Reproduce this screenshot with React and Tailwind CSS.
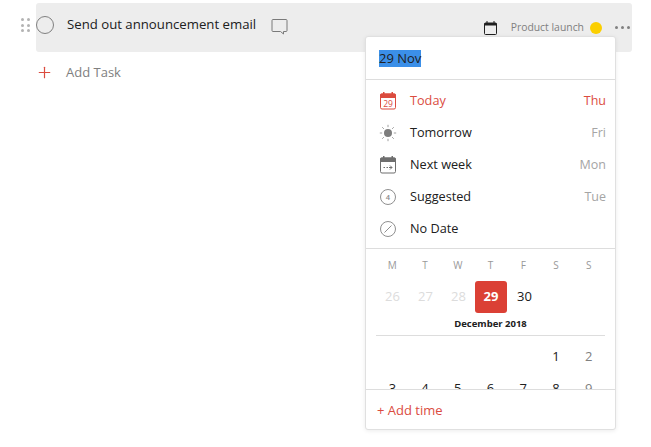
import { Plus } from 'lucide-react';

const font = { fontFamily: '"Open Sans", "Noto Sans", sans-serif' };

const TodayIcon = () => (
  <svg width="18" height="18" viewBox="0 0 18 18" fill="none">
    <path d="M1 6V3a1.5 1.5 0 0 1 1.5-1.5h13A1.5 1.5 0 0 1 17 3v3z" fill="#db4c3f" />
    <rect x="4" y="0" width="1.5" height="3" fill="#db4c3f" />
    <rect x="12.5" y="0" width="1.5" height="3" fill="#db4c3f" />
    <rect x="1.5" y="2" width="15" height="15" rx="1.5" stroke="#db4c3f" />
    <text x="9" y="14.7" textAnchor="middle" fontSize="8.5" fill="#db4c3f" fontFamily="Open Sans">29</text>
  </svg>
);

const SunIcon = () => (
  <svg width="18" height="18" viewBox="0 0 18 18" fill="none" stroke="#a0a0a0" strokeWidth="1">
    <circle cx="9" cy="9" r="4" fill="#7d7d7d" stroke="none" />
    <path d="M9 .8v2.4M9 14.8v2.4M.8 9h2.4M14.8 9h2.4M3.2 3.2l1.7 1.7M13.1 13.1l1.7 1.7M3.2 14.8l1.7-1.7M13.1 4.9l1.7-1.7" />
  </svg>
);

const NextWeekIcon = () => (
  <svg width="18" height="18" viewBox="0 0 18 18" fill="none">
    <path d="M1 6V3a1.5 1.5 0 0 1 1.5-1.5h13A1.5 1.5 0 0 1 17 3v3z" fill="#6f6f6f" />
    <rect x="4" y="0" width="1.5" height="3" fill="#6f6f6f" />
    <rect x="12.5" y="0" width="1.5" height="3" fill="#6f6f6f" />
    <rect x="1.5" y="2" width="15" height="15" rx="1.5" stroke="#6f6f6f" />
    <path d="M4.5 11.5h1.5M7.5 11.5h1.5M10 11.5h3M11 9.5l2 2-2 2" stroke="#6f6f6f" />
  </svg>
);

const SuggestedIcon = () => (
  <svg width="18" height="18" viewBox="0 0 18 18" fill="none">
    <circle cx="9" cy="9" r="7.5" stroke="#8f8f8f" />
    <text x="9" y="11.7" textAnchor="middle" fontSize="7.5" fontWeight="600" fill="#8a8a8a" fontFamily="Open Sans">4</text>
  </svg>
);

const NoDateIcon = () => (
  <svg width="18" height="18" viewBox="0 0 18 18" fill="none" stroke="#8f8f8f">
    <circle cx="9" cy="9" r="7.5" />
    <path d="M5.5 12.5l7-7" />
  </svg>
);

const options = [
  { label: 'Today', day: 'Thu', icon: <TodayIcon />, red: true },
  { label: 'Tomorrow', day: 'Fri', icon: <SunIcon /> },
  { label: 'Next week', day: 'Mon', icon: <NextWeekIcon /> },
  { label: 'Suggested', day: 'Tue', icon: <SuggestedIcon /> },
  { label: 'No Date', day: '', icon: <NoDateIcon /> },
];

const weekdays = ['M', 'T', 'W', 'T', 'F', 'S', 'S'];
const decFirst = ['', '', '', '', '', '1', '2'];
const decSecond = ['3', '4', '5', '6', '7', '8', '9'];

const DayCell = ({ children, className = '' }) => (
  <div className={`flex h-8 w-[33px] items-center justify-center text-[13px] ${className}`}>{children}</div>
);

const App = () => {
  return (
    <div className="relative h-[447px] w-[651px] overflow-hidden bg-white" style={font}>
      {/* 할일 행 */}
      <div className="ml-[21px] mt-[3px] flex">
        <div className="mt-[15px] grid h-[15px] w-[9px] shrink-0 grid-cols-2 gap-[2px]">
          {[0, 1, 2, 3, 4, 5].map((i) => (
            <span key={i} className="h-[3px] w-[3px] rounded-full bg-[#b3b3b3]" />
          ))}
        </div>
        <div className="ml-[6px] flex h-[49px] w-[596px] items-center rounded-[3px] bg-[#ededed]">
          <div className="mb-[5px] h-[18px] w-[18px] rounded-full border border-[#808080]" />
          <span className="mb-[5px] ml-[13px] text-[13.2px] text-[#202020]">Send out announcement email</span>
          <svg className="mb-[3px] ml-[15px]" width="17" height="17" viewBox="0 0 17 17" fill="none" stroke="#7a7a7a">
            <path d="M2 1.5h13a1 1 0 0 1 1 1v10a1 1 0 0 1-1 1h-2.5v2.5l-3-2.5H2a1 1 0 0 1-1-1v-10a1 1 0 0 1 1-1z" />
          </svg>
          <svg className="ml-auto" width="13" height="14" viewBox="0 0 13 14" fill="none">
            <rect x="0.5" y="2" width="12" height="11.5" rx="1" stroke="#202020" />
            <rect x="0.5" y="2" width="12" height="2.5" fill="#202020" />
            <rect x="2.5" y="0" width="1" height="3" fill="#202020" />
            <rect x="9.5" y="0" width="1" height="3" fill="#202020" />
          </svg>
          <span className="ml-[14px] text-[10.4px] text-[#808080]">Product launch</span>
          <span className="ml-[6px] h-3 w-3 rounded-full bg-[#fbcf00]" />
          <div className="ml-[13px] mr-[2px] flex gap-[3px]">
            <span className="h-[3px] w-[3px] rounded-full bg-[#808080]" />
            <span className="h-[3px] w-[3px] rounded-full bg-[#808080]" />
            <span className="h-[3px] w-[3px] rounded-full bg-[#808080]" />
          </div>
        </div>
      </div>

      {/* 할일 추가 */}
      <div className="ml-[37px] mt-[11px] flex items-center">
        <Plus size={15} strokeWidth={1} color="#db4c3f" absoluteStrokeWidth className="scale-[1.2]" />
        <span className="ml-[14px] text-[13px] text-[#808080]">Add Task</span>
      </div>

      {/* 날짜 선택 팝업 */}
      <div className="absolute left-[365px] top-[36px] flex h-[394px] w-[251px] flex-col overflow-hidden rounded-[3px] border border-[#e0e0e0] bg-white shadow-[0_1px_4px_rgba(0,0,0,0.08)]">
        <div className="flex h-[43px] shrink-0 items-center border-b border-[#ddd] pl-[13px] pt-[1px]">
          <span className="bg-[#3b8fe8] text-[13px] leading-[17px] text-[#202020]">29 Nov</span>
        </div>

        <div className="flex shrink-0 flex-col border-b border-[#ddd] pb-[3px] pt-[5px]">
          {options.map((o) => (
            <div key={o.label} className="flex h-8 items-center pl-[13px] pr-[9px]">
              {o.icon}
              <span className={`ml-[13px] text-[12.7px] font-medium ${o.red ? 'text-[#db4c3f]' : 'text-[#202020]'}`}>
                {o.label}
              </span>
              <span className={`ml-auto text-[12.5px] ${o.red ? 'text-[#db4c3f]' : 'text-[#a5a5a5]'}`}>{o.day}</span>
            </div>
          ))}
        </div>

        <div className="min-h-0 flex-1 overflow-hidden px-[10px]">
          <div className="flex h-[32px] items-center">
            {weekdays.map((d, i) => (
              <div key={i} className="w-[33px] text-center text-[10px] text-[#999]">
                {d}
              </div>
            ))}
          </div>
          <div className="flex">
            {['26', '27', '28'].map((d) => (
              <DayCell key={d} className="text-[#dcdcdc]">{d}</DayCell>
            ))}
            <div className="mr-[1px] flex h-8 w-8 items-center justify-center rounded-[3px] bg-[#db4035] text-[13px] font-bold text-white">
              29
            </div>
            <DayCell className="text-[#202020]">30</DayCell>
          </div>
          <div className="flex h-[23px] items-center justify-center border-b border-[#ddd] text-[9.5px] font-bold text-[#202020]">
            December 2018
          </div>
          <div className="mt-[5px] flex">
            {decFirst.map((d, i) => (
              <DayCell key={i} className={i === 6 ? 'text-[#808080]' : 'text-[#202020]'}>{d}</DayCell>
            ))}
          </div>
          <div className="flex">
            {decSecond.map((d, i) => (
              <DayCell key={i} className={i === 6 ? 'text-[#808080]' : 'text-[#202020]'}>{d}</DayCell>
            ))}
          </div>
        </div>

        <div className="flex h-[40px] shrink-0 items-center border-t border-[#ddd] pl-[11px] pt-[3px] text-[13px] text-[#db4c3f]">
          + Add time
        </div>
      </div>
    </div>
  );
};

export default App;
